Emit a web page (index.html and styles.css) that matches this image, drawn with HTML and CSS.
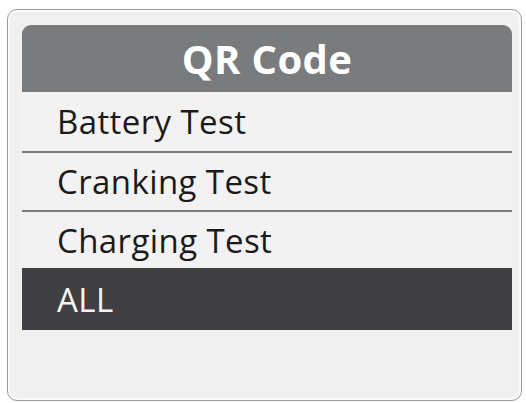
FILE: index.html
```html
<!DOCTYPE html>
<html>
<head>
<meta charset="utf-8">
<link rel="stylesheet" href="styles.css">
</head>
<body>
<div class="frame">
  <div class="header">QR Code</div>
  <div class="row sep first">Battery Test</div>
  <div class="row sep">Cranking Test</div>
  <div class="row">Charging Test</div>
  <div class="row selected">ALL</div>
</div>
</body>
</html>
```
FILE: styles.css
```css
html, body {
  margin: 0;
  padding: 0;
  background: #ffffff;
}
body {
  font-family: "Open Sans", "Noto Sans", sans-serif;
}
.frame {
  box-sizing: border-box;
  margin: 9px 0 0 7px;
  width: 515px;
  height: 392px;
  border: 1px solid #9a9a9a;
  box-shadow: inset 0 0 0 2px #fbfbfb;
  border-radius: 10px;
  background: #f0f0f0;
  padding: 15px 9px 0 14px;
  display: flex;
  flex-direction: column;
}
.header {
  height: 67px;
  flex: none;
  background: #7a7b7d;
  border-radius: 9px 9px 0 0;
  color: #ffffff;
  font-weight: 700;
  font-size: 40px;
  letter-spacing: 0.4px;
  display: flex;
  align-items: center;
  justify-content: center;
}
.row {
  box-sizing: border-box;
  flex: none;
  height: 56px;
  display: flex;
  align-items: center;
  padding-left: 35px;
  font-size: 33px;
  letter-spacing: 0.4px;
  color: #1a1a1a;
  background: #f2f2f2;
}
.row.sep {
  height: 59px;
  border-bottom: 2px solid #7c7c7c;
}
.row.sep.first {
  height: 61px;
}
.row.selected {
  height: 62px;
  background: #404042;
  color: #f4f4f4;
}
```
